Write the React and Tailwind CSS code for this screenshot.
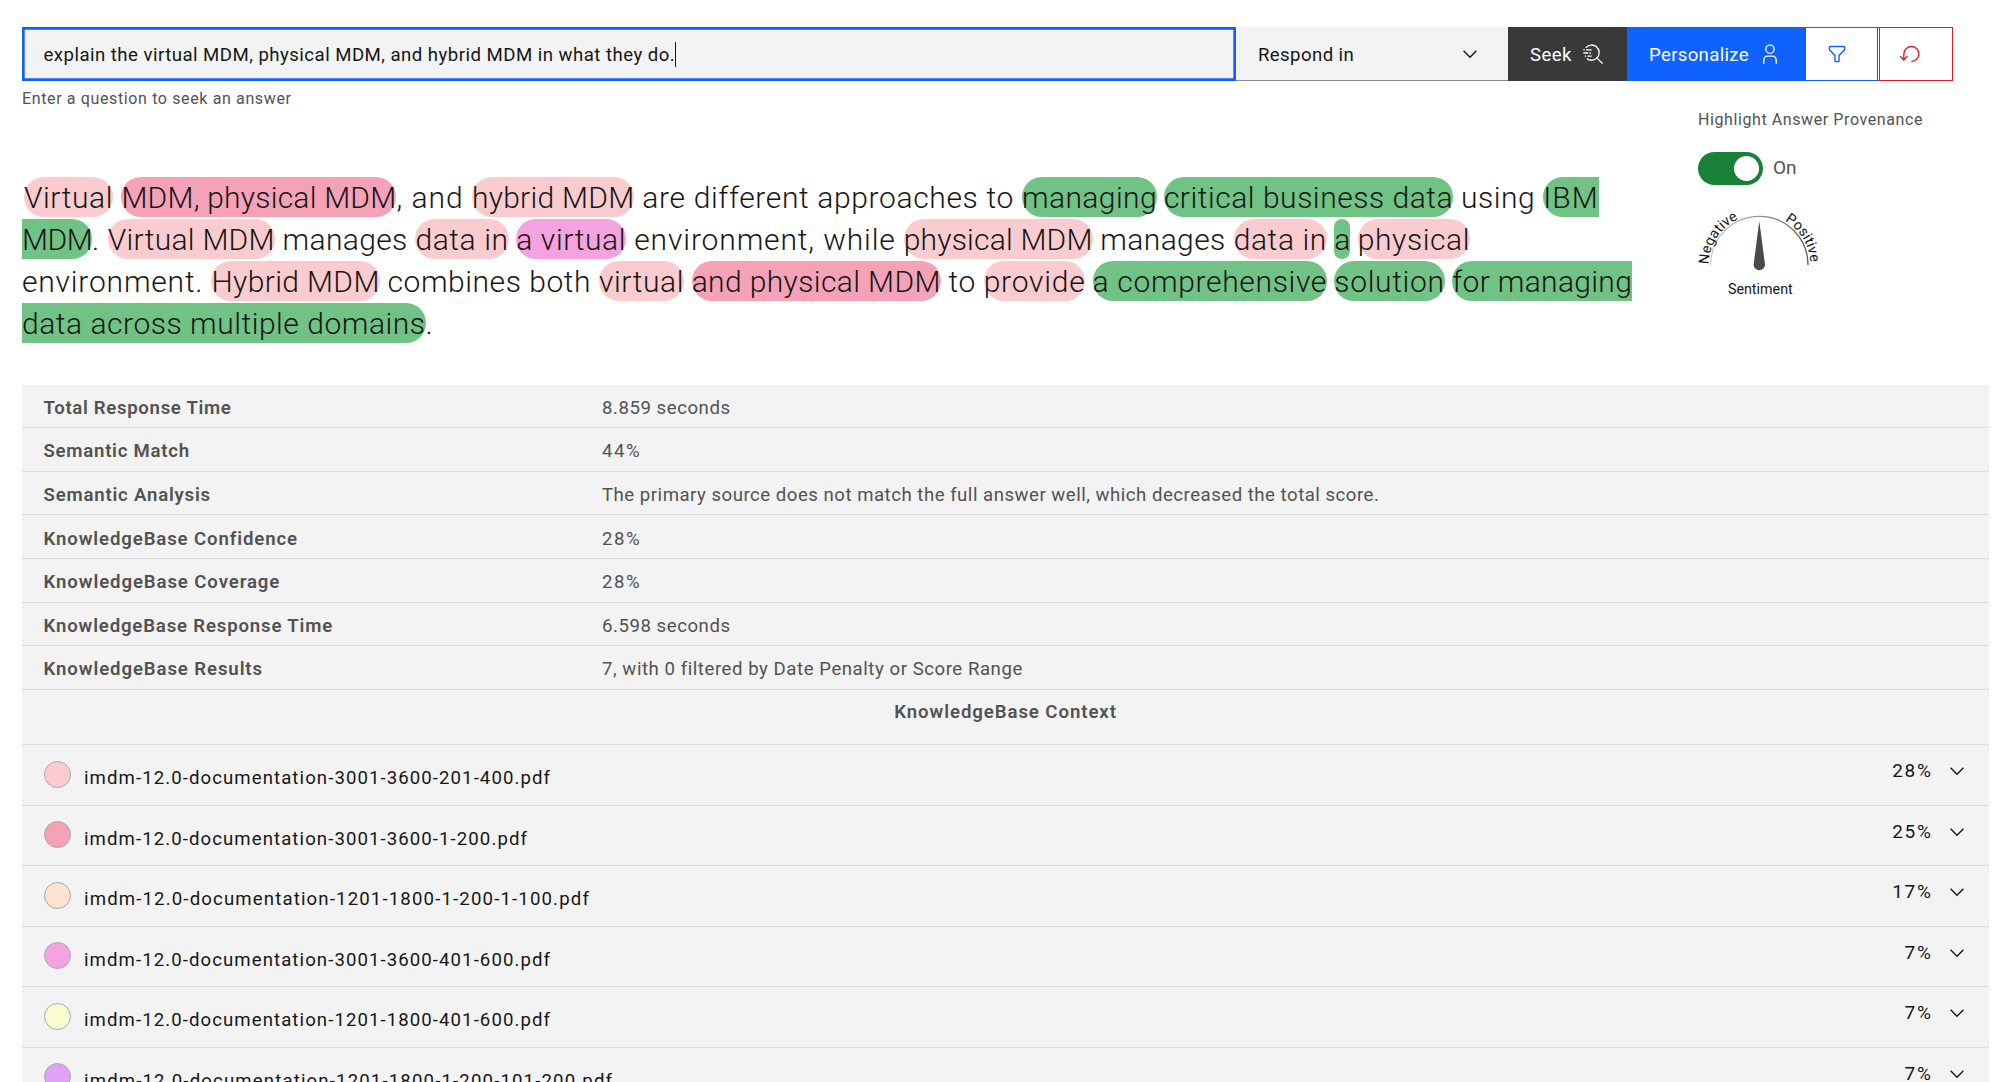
import React from "react";

const BLUSH = "bg-[#fbcccf]";
const ROSE = "bg-[#f5a2b9]";
const ORCHID = "bg-[#f4a2e0]";
const GREEN = "bg-[#71c285]";

const answer = [
  [
    { text: "Virtual", tone: BLUSH, shape: "ml-[2px] w-[89px] rounded-full tracking-[0.56px]" },
    { text: " ", shape: "w-[8.4px]" },
    { text: "MDM, physical MDM", tone: ROSE, shape: "w-[275px] rounded-full tracking-[0.23px]" },
    { text: ", and ", shape: "w-[75.5px] tracking-[0.98px]" },
    { text: "hybrid MDM", tone: BLUSH, shape: "w-[162.5px] rounded-full tracking-[0.27px]" },
    { text: " are different approaches to ", shape: "w-[387.5px] tracking-[0.64px]" },
    { text: "managing", tone: GREEN, shape: "w-[135.2px] rounded-full tracking-[0.42px]" },
    { text: " ", shape: "w-[6.8px]" },
    { text: "critical business data", tone: GREEN, shape: "w-[289.3px] rounded-full tracking-[0.53px]" },
    { text: " using ", shape: "w-[90px] tracking-[0.54px]" },
    { text: "IBM", tone: GREEN, shape: "w-[55.5px] rounded-l-full tracking-[1.05px]" },
  ],
  [
    { text: "MDM", tone: GREEN, shape: "w-[70.1px] rounded-r-full tracking-[-0.49px]" },
    { text: ". ", shape: "w-[15.7px] tracking-[0.61px]" },
    { text: "Virtual MDM", tone: BLUSH, shape: "w-[167px] rounded-full tracking-[0.28px]" },
    { text: " manages ", shape: "w-[140.6px] tracking-[0.37px]" },
    { text: "data in", tone: BLUSH, shape: "w-[93.3px] rounded-full tracking-[0.61px]" },
    { text: " ", shape: "w-[7.6px]" },
    { text: "a virtual", tone: ORCHID, shape: "w-[109.8px] rounded-full tracking-[0.6px]" },
    { text: " environment, while ", shape: "w-[277.7px] tracking-[0.87px]" },
    { text: "physical MDM", tone: BLUSH, shape: "w-[188.8px] rounded-full tracking-[0.19px]" },
    { text: " manages ", shape: "w-[141.1px] tracking-[0.4px]" },
    { text: "data in", tone: BLUSH, shape: "w-[93.1px] rounded-full tracking-[0.61px]" },
    { text: " ", shape: "w-[7.6px]" },
    { text: "a", tone: GREEN, shape: "w-[15.7px] rounded-full" },
    { text: " ", shape: "w-[7.7px]" },
    { text: "physical", tone: BLUSH, shape: "w-[112.4px] rounded-full tracking-[0.6px]" },
  ],
  [
    { text: "environment. ", shape: "w-[189.4px] tracking-[0.8px]" },
    { text: "Hybrid MDM", tone: BLUSH, shape: "w-[168.3px] rounded-full tracking-[0.38px]" },
    { text: " combines both ", shape: "w-[219.2px] tracking-[0.55px]" },
    { text: "virtual", tone: BLUSH, shape: "w-[85.2px] rounded-full tracking-[0.61px]" },
    { text: " ", shape: "w-[7.6px]" },
    { text: "and physical MDM", tone: ROSE, shape: "w-[249.1px] rounded-full tracking-[0.38px]" },
    { text: " to ", shape: "w-[42.9px] tracking-[0.53px]" },
    { text: "provide", tone: BLUSH, shape: "w-[101.8px] rounded-full tracking-[0.77px]" },
    { text: " ", shape: "w-[7.1px]" },
    { text: "a comprehensive", tone: GREEN, shape: "w-[234.5px] rounded-full tracking-[0.67px]" },
    { text: " ", shape: "w-[7.3px]" },
    { text: "solution", tone: GREEN, shape: "w-[110.3px] rounded-full tracking-[0.67px]" },
    { text: " ", shape: "w-[7.6px]" },
    { text: "for managing", tone: GREEN, shape: "w-[179.9px] rounded-l-full tracking-[0.33px]" },
  ],
  [
    { text: "data across multiple domains", tone: GREEN, shape: "w-[403.6px] rounded-r-full tracking-[0.53px]" },
    { text: ".", shape: "" },
  ],
];

const metrics = [
  { label: "Total Response Time", value: "8.859 seconds", fit: "tracking-[0.68px]", valueFit: "tracking-[0.55px]" },
  { label: "Semantic Match", value: "44%", fit: "tracking-[0.75px]", valueFit: "tracking-[1.6px]" },
  { label: "Semantic Analysis", value: "The primary source does not match the full answer well, which decreased the total score.", fit: "tracking-[0.8px]", valueFit: "tracking-[0.51px]" },
  { label: "KnowledgeBase Confidence", value: "28%", fit: "tracking-[0.88px]", valueFit: "tracking-[1.6px]" },
  { label: "KnowledgeBase Coverage", value: "28%", fit: "tracking-[0.9px]", valueFit: "tracking-[1.6px]" },
  { label: "KnowledgeBase Response Time", value: "6.598 seconds", fit: "tracking-[0.83px]", valueFit: "tracking-[0.55px]" },
  { label: "KnowledgeBase Results", value: "7, with 0 filtered by Date Penalty or Score Range", fit: "tracking-[0.9px]", valueFit: "tracking-[0.55px]" },
];

const documents = [
  { name: "imdm-12.0-documentation-3001-3600-201-400.pdf", score: "28%", tone: "bg-[#fbcccf]", fit: "tracking-[1.08px]" },
  { name: "imdm-12.0-documentation-3001-3600-1-200.pdf", score: "25%", tone: "bg-[#f5a2b9]", fit: "tracking-[1.08px]" },
  { name: "imdm-12.0-documentation-1201-1800-1-200-1-100.pdf", score: "17%", tone: "bg-[#fde3cf]", fit: "tracking-[1.15px]" },
  { name: "imdm-12.0-documentation-3001-3600-401-600.pdf", score: "7%", tone: "bg-[#f4a2e0]", fit: "tracking-[1.08px]" },
  { name: "imdm-12.0-documentation-1201-1800-401-600.pdf", score: "7%", tone: "bg-[#fbfccf]", fit: "tracking-[1.08px]" },
  { name: "imdm-12.0-documentation-1201-1800-1-200-101-200.pdf", score: "7%", tone: "bg-[#dfa2f6]", fit: "tracking-[1.15px]" },
];

function Chevron({ className }) {
  return (
    <svg viewBox="0 0 16 16" fill="currentColor" className={className}>
      <path d="M8 11 3 6 3.7 5.3 8 9.6 12.3 5.3 13 6z" />
    </svg>
  );
}

function SeekIcon() {
  return (
    <svg viewBox="0 0 32 32" fill="none" stroke="currentColor" strokeWidth="2" className="h-[22px] w-[22px]">
      <path d="M5.5 7A11 11 0 1 1 7 22.5M22 22l8 8" />
      <path d="M2 10h2M6 10h8M2 14.5h7M11 14.5h2M4 19h2M8 19h6" />
    </svg>
  );
}

function UserIcon() {
  return (
    <svg viewBox="0 0 32 32" fill="currentColor" className="h-[22px] w-[22px]">
      <path d="M16 4a5 5 0 1 1-5 5 5 5 0 0 1 5-5m0-2a7 7 0 1 0 7 7A7 7 0 0 0 16 2zM26 30H24V25a5 5 0 0 0-5-5H13a5 5 0 0 0-5 5v5H6V25a7 7 0 0 1 7-7h6a7 7 0 0 1 7 7z" />
    </svg>
  );
}

function FilterIcon() {
  return (
    <svg viewBox="0 0 32 32" fill="currentColor" className="h-[22px] w-[22px]">
      <path d="M18 28H14a2 2 0 0 1-2-2V18.41L4.59 11A2 2 0 0 1 4 9.59V6A2 2 0 0 1 6 4H26a2 2 0 0 1 2 2V9.59A2 2 0 0 1 27.41 11L20 18.41V26A2 2 0 0 1 18 28ZM6 6V9.59l8 8V26h4V17.59l8-8V6Z" />
    </svg>
  );
}

function ResetIcon() {
  return (
    <svg viewBox="0 0 32 32" fill="currentColor" className="h-[22px] w-[22px]">
      <path d="M18 28A12 12 0 1 0 6 16v6.2L2.4 18.6 1 20l6 6 6-6-1.4-1.4L8 22.2V16H8A10 10 0 1 1 18 26Z" />
    </svg>
  );
}

function SearchBar() {
  return (
    <header className="flex h-[54px] w-[1931px] text-[18.6px] leading-[24px] text-[#161616]">
      <div className="flex w-[1214px] items-center bg-[#f3f3f3] pl-[21.5px] shadow-[inset_0_0_0_2.7px_#0f62fe]">
        <span className="whitespace-nowrap pt-[2px] tracking-[0.47px]">
          explain the virtual MDM, physical MDM, and hybrid MDM in what they do.
        </span>
        <span className="h-[25px] w-px bg-[#161616]" />
      </div>
      <div className="flex w-[272px] items-center justify-between border-b border-[#8d8d8d] bg-[#f3f3f3] pl-[22px] pr-[27px]">
        <span className="pt-[2px] tracking-[0.4px]">Respond in</span>
        <Chevron className="h-[22px] w-[22px]" />
      </div>
      <button className="flex w-[119px] items-center bg-[#393939] pl-[22px] text-white">
        <span className="w-[52px] pt-[2px] text-left tracking-[0.38px]">Seek</span>
        <SeekIcon />
      </button>
      <button className="flex w-[178px] items-center bg-[#0f62fe] pl-[22px] text-white">
        <span className="w-[110px] pt-[2px] text-left tracking-[0.33px]">Personalize</span>
        <UserIcon />
      </button>
      <button className="flex w-[75px] items-center border border-[#0f62fe] pl-[20px] text-[#0f62fe]">
        <FilterIcon />
      </button>
      <button className="-ml-[3px] flex w-[76px] items-center border border-[#da1e28] pl-[21px] text-[#da1e28]">
        <ResetIcon />
      </button>
    </header>
  );
}

function SentimentGauge() {
  return (
    <svg viewBox="0 0 140 100" className="mt-[15px] -ml-[8px] block h-[100px] w-[140px] text-[14.3px]" fill="#161616">
      <defs>
        <linearGradient id="arc" x1="0" x2="1" y1="0" y2="0">
          <stop offset="0" stopColor="#cfcfcf" />
          <stop offset="1" stopColor="#5a5a5a" />
        </linearGradient>
        <path id="negative" d="M18.8 64.5A50.5 50.5 0 0 1 69.3 14.5" />
        <path id="positive" d="M94.8 20.7A51 51 0 0 1 120.3 66" />
      </defs>
      <path d="M20.6 65a48.7 48.7 0 0 1 97.4 0" fill="none" stroke="url(#arc)" strokeWidth="1.3" />
      <path d="M69.3 21 75 64.5a5.7 5.7 0 0 1-11.4 0z" fill="#474b50" />
      <text textLength="57" lengthAdjust="spacing">
        <textPath href="#negative">Negative</textPath>
      </text>
      <text>
        <textPath href="#positive">Positive</textPath>
      </text>
      <text x="70.3" y="94" textAnchor="middle">Sentiment</text>
    </svg>
  );
}

function ProvenancePanel() {
  return (
    <aside className="ml-[41px] w-[280px]">
      <p className="mt-[29px] text-[16px] leading-[20px] tracking-[0.59px] text-[#525252]">Highlight Answer Provenance</p>
      <div className="mt-[22px] flex items-center gap-[10px]">
        <div className="flex h-[33px] w-[65px] items-center justify-end rounded-full bg-[#198038] pr-[4px]">
          <span className="h-[25px] w-[25px] rounded-full bg-white" />
        </div>
        <span className="text-[19px] text-[#525252]">On</span>
      </div>
      <SentimentGauge />
    </aside>
  );
}

function Answer() {
  return (
    <div className="mt-[68px] flex flex-col gap-[2.3px] text-[30px] font-light leading-[41px] text-[#161616]">
      {answer.map((line, i) => (
        <p key={i} className="flex whitespace-pre">
          {line.map((piece, j) => (
            <span key={j} className={`block h-[39.7px] shrink-0 ${piece.tone ?? ""} ${piece.shape}`}>
              {piece.text}
            </span>
          ))}
        </p>
      ))}
    </div>
  );
}

export default function App() {
  return (
    <main className="h-[1082px] overflow-hidden bg-white pl-[22px] pt-[27px] font-['Roboto',sans-serif]">
      <SearchBar />
      <div className="flex h-[303.7px]">
        <div className="w-[1635px]">
          <p className="mt-[8px] text-[16px] leading-[20px] tracking-[0.63px] text-[#525252]">Enter a question to seek an answer</p>
          <Answer />
        </div>
        <ProvenancePanel />
      </div>
      <section className="w-[1967px] bg-[#f3f3f3] text-[18.6px]">
        {metrics.map((row) => (
          <div key={row.label} className="flex h-[43.6px] items-center border-b border-[#dcdcdc] pl-[21.5px] pt-[3.6px] leading-[24px] text-[#525252]">
            <span className={`w-[558.5px] font-semibold ${row.fit}`}>{row.label}</span>
            <span className={row.valueFit}>{row.value}</span>
          </div>
        ))}
        <h2 className="h-[55.4px] border-b border-[#dcdcdc] pt-[10px] text-center font-semibold leading-[24px] tracking-[0.93px] text-[#525252]">
          KnowledgeBase Context
        </h2>
        {documents.map((doc) => (
          <div key={doc.name} className="flex h-[60.5px] border-b border-[#dcdcdc] pl-[21.5px] pr-[21.5px] leading-[24px] text-[#161616]">
            <span className={`mt-[15.5px] h-[27px] w-[27px] rounded-full border border-[#a8a8a8] ${doc.tone}`} />
            <span className={`ml-[13.5px] mt-[21.2px] grow ${doc.fit}`}>{doc.name}</span>
            <span className="mt-[14.2px] text-[19px] tracking-[1.7px]">{doc.score}</span>
            <Chevron className="ml-[13px] mt-[15.2px] h-[22px] w-[22px]" />
          </div>
        ))}
      </section>
    </main>
  );
}
